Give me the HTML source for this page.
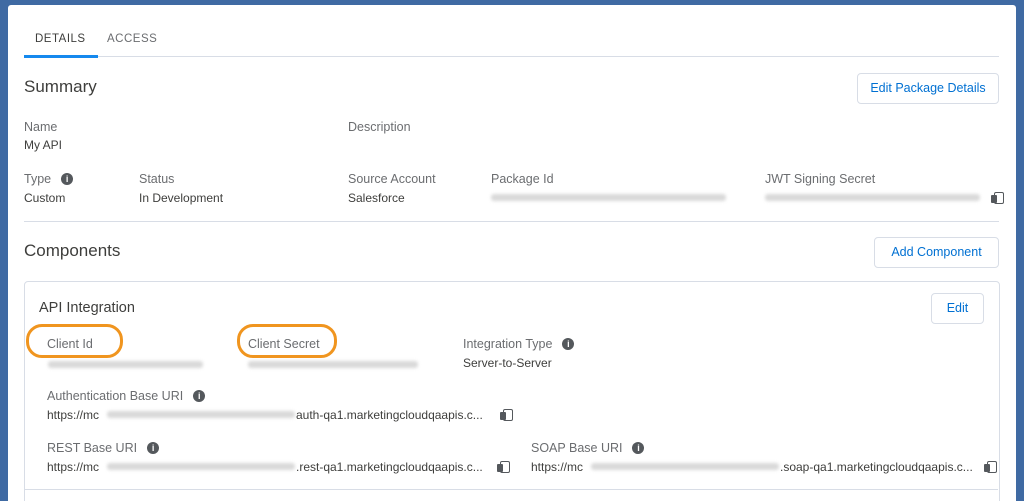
<!DOCTYPE html>
<html><head><style>
html,body{margin:0;width:1024px;height:501px;overflow:hidden}
body{background:#3f6aa3;font-family:"Liberation Sans",sans-serif;position:relative}
.card{position:absolute;left:8px;top:5px;width:1008px;height:510px;background:#fff;border-radius:3px}
.a{position:absolute;white-space:nowrap}
.l{font-size:12.5px;color:#6b6d70}
.v{font-size:12px;color:#3e3e3c}
.h{font-size:17px;color:#3e3e3c}
.btn{position:absolute;border:1px solid #d8dde6;border-radius:4px;color:#0070d2;font-size:12.5px;text-align:center;background:#fff}
.hr{position:absolute;height:1px;background:#d8dde6}
.blur{position:absolute;height:7px;background:#d9d9d9;border-radius:3px;filter:blur(1.5px)}
.i{display:inline-block;width:12px;height:12px;border-radius:50%;background:#54585c;color:#fff;font-size:9px;font-weight:bold;text-align:center;line-height:12px;vertical-align:1px;margin-left:10px}
.cp{position:absolute;width:8px;height:10px;border:1.5px solid #54585c;border-radius:2px;background:#fff}
.cp:before{content:"";position:absolute;left:-4px;top:2px;width:6px;height:8px;background:#54585c;border-radius:1px}
.ov{position:absolute;border:3px solid #f0951f;border-radius:16px}
</style></head><body>
<div class="card">
<div class="a" style="left:27px;top:28px;font-size:11.5px;color:#3e3e3c;letter-spacing:.5px">DETAILS</div>
<div class="a" style="left:99px;top:28px;font-size:11.5px;color:#6b6d70;letter-spacing:.5px">ACCESS</div>
<div class="hr" style="left:16px;top:51px;width:975px"></div>
<div class="a" style="left:16px;top:50px;width:74px;height:3px;background:#1589ee"></div>
<div class="a h" style="left:16px;top:72px">Summary</div>
<div class="btn" style="left:849px;top:68px;width:140px;height:29px;line-height:29px">Edit Package Details</div>
<div class="a l" style="left:16px;top:115px">Name</div>
<div class="a v" style="left:16px;top:133px">My API</div>
<div class="a l" style="left:340px;top:115px">Description</div>
<div class="a l" style="left:16px;top:167px">Type<span class="i">i</span></div>
<div class="a v" style="left:16px;top:186px">Custom</div>
<div class="a l" style="left:131px;top:167px">Status</div>
<div class="a v" style="left:131px;top:186px">In Development</div>
<div class="a l" style="left:340px;top:167px">Source Account</div>
<div class="a v" style="left:340px;top:186px">Salesforce</div>
<div class="a l" style="left:483px;top:167px">Package Id</div>
<div class="blur" style="left:483px;top:189px;width:235px"></div>
<div class="a l" style="left:757px;top:167px">JWT Signing Secret</div>
<div class="blur" style="left:757px;top:189px;width:215px"></div>
<div class="cp" style="left:986px;top:187px"></div>
<div class="hr" style="left:16px;top:216px;width:975px"></div>
<div class="a h" style="left:16px;top:236px">Components</div>
<div class="btn" style="left:866px;top:232px;width:123px;height:29px;line-height:29px">Add Component</div>
<div class="a" style="left:16px;top:276px;width:974px;height:240px;border:1px solid #d8dde6;border-radius:4px"></div>
<div class="a" style="left:31px;top:295px;font-size:14.5px;color:#3e3e3c">API Integration</div>
<div class="btn" style="left:923px;top:288px;width:51px;height:29px;line-height:29px">Edit</div>
<div class="a l" style="left:39px;top:332px">Client Id</div>
<div class="ov" style="left:18px;top:319px;width:91px;height:28px"></div>
<div class="blur" style="left:40px;top:356px;width:155px"></div>
<div class="a l" style="left:240px;top:332px">Client Secret</div>
<div class="ov" style="left:229px;top:319px;width:94px;height:28px"></div>
<div class="blur" style="left:240px;top:356px;width:170px"></div>
<div class="a l" style="left:455px;top:332px">Integration Type<span class="i">i</span></div>
<div class="a v" style="left:455px;top:351px">Server-to-Server</div>
<div class="a l" style="left:39px;top:384px">Authentication Base URI<span class="i">i</span></div>
<div class="a v" style="left:39px;top:403px">https://mc</div>
<div class="blur" style="left:99px;top:406px;width:188px"></div>
<div class="a v" style="left:288px;top:403px">auth-qa1.marketingcloudqaapis.c...</div>
<div class="cp" style="left:495px;top:404px"></div>
<div class="a l" style="left:39px;top:436px">REST Base URI<span class="i">i</span></div>
<div class="a v" style="left:39px;top:455px">https://mc</div>
<div class="blur" style="left:99px;top:458px;width:188px"></div>
<div class="a v" style="left:288px;top:455px">.rest-qa1.marketingcloudqaapis.c...</div>
<div class="cp" style="left:492px;top:456px"></div>
<div class="a l" style="left:523px;top:436px">SOAP Base URI<span class="i">i</span></div>
<div class="a v" style="left:523px;top:455px">https://mc</div>
<div class="blur" style="left:583px;top:458px;width:188px"></div>
<div class="a v" style="left:772px;top:455px">.soap-qa1.marketingcloudqaapis.c...</div>
<div class="cp" style="left:979px;top:456px"></div>
<div class="hr" style="left:17px;top:484px;width:973px"></div>
</div>
</body></html>
